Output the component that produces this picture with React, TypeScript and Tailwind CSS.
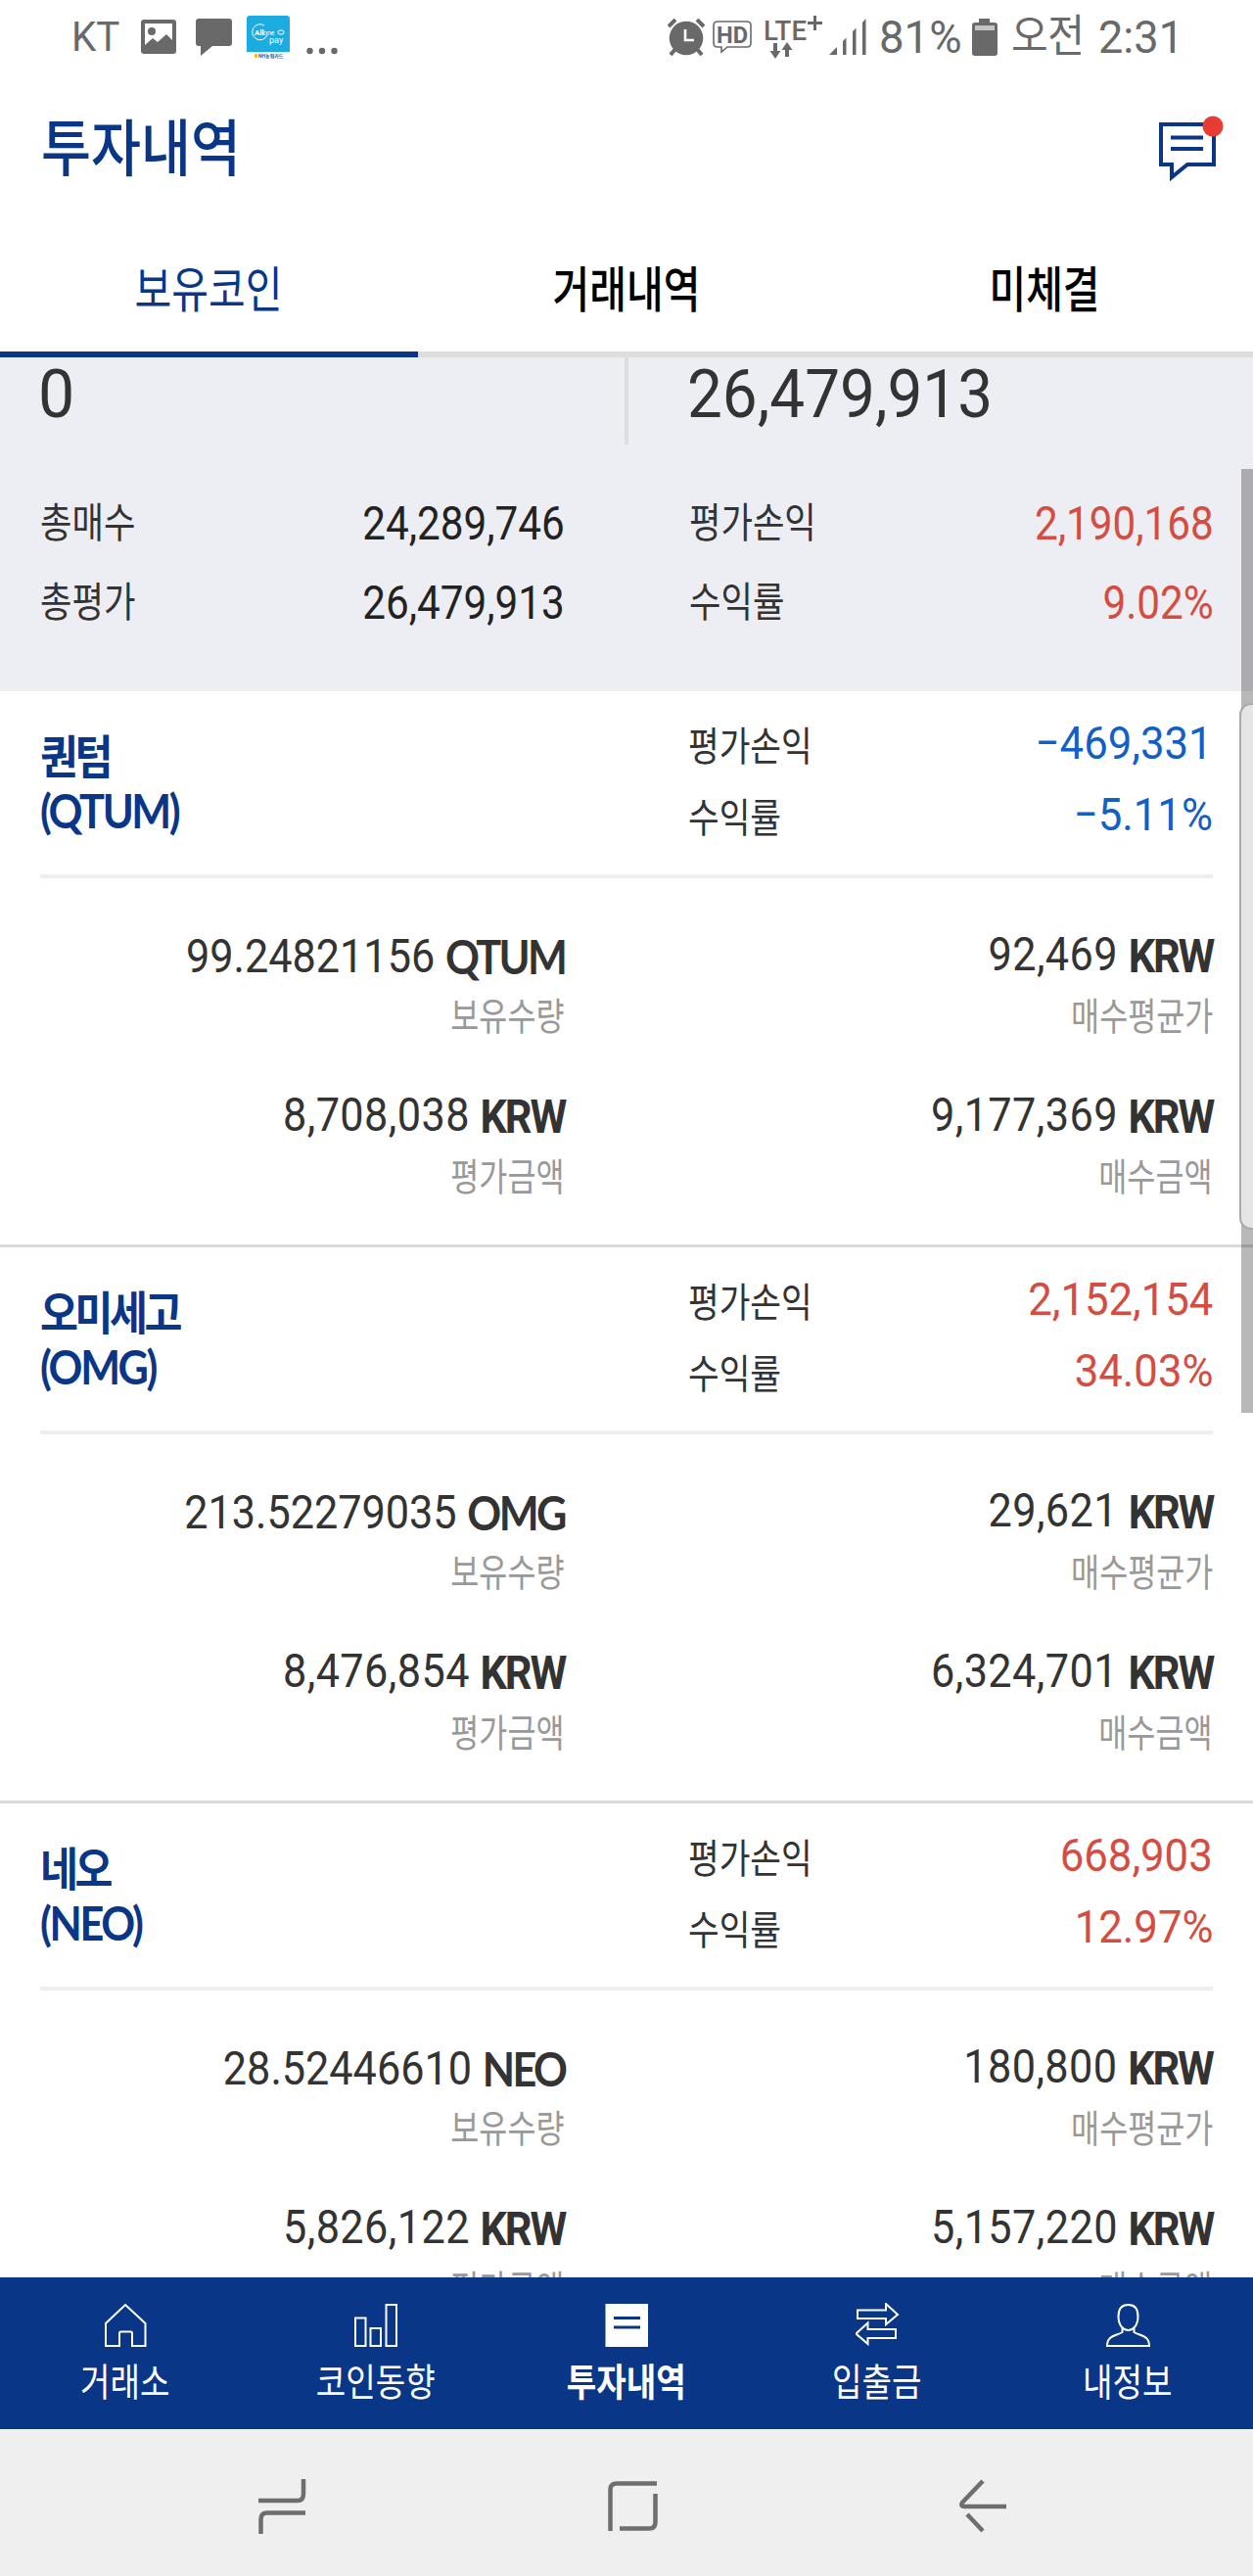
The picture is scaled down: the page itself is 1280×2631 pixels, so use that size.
import React from 'react';

interface Coin {
  name: string;
  symbol: string;
  profit: string;
  rate: string;
  down?: boolean;
  amount: string;
  average: string;
  valuation: string;
  cost: string;
}

const coins: Coin[] = [
  {
    name: '퀀텀',
    symbol: 'QTUM',
    profit: '−469,331',
    rate: '−5.11%',
    down: true,
    amount: '99.24821156',
    average: '92,469',
    valuation: '8,708,038',
    cost: '9,177,369',
  },
  {
    name: '오미세고',
    symbol: 'OMG',
    profit: '2,152,154',
    rate: '34.03%',
    amount: '213.52279035',
    average: '29,621',
    valuation: '8,476,854',
    cost: '6,324,701',
  },
  {
    name: '네오',
    symbol: 'NEO',
    profit: '668,903',
    rate: '12.97%',
    amount: '28.52446610',
    average: '180,800',
    valuation: '5,826,122',
    cost: '5,157,220',
  },
];

function StatusBar() {
  return (
    <div className="flex h-[76px] shrink-0 items-center pl-[73px] pr-[76px] text-[42px] leading-[76px] text-[#696969]">
      <span className="w-[71px] origin-left scale-x-[0.96]">KT</span>
      <svg width="36" height="36" viewBox="0 0 36 36" fill="#696969">
        <path fillRule="evenodd" d="M3 0H33Q36 0 36 3V32Q36 35 33 35H3Q0 35 0 32V3Q0 0 3 0ZM4 4V26L12 19L17 23L26 15L32 21V4Z" />
        <circle cx="11" cy="12" r="4" />
      </svg>
      <svg className="ml-5" width="37" height="38" viewBox="0 0 37 38" fill="#696969">
        <path d="M3 0H34Q37 0 37 3V25Q37 28 34 28H17L5 38V28H3Q0 28 0 25V3Q0 0 3 0Z" />
      </svg>
      <svg className="ml-[15px]" width="44" height="44" viewBox="0 0 44 44">
        <path d="M3 0H41Q44 0 44 3V37H0V3Q0 0 3 0Z" fill="#1dace2" />
        <path d="M18 10A8 8 0 1 0 21 20" fill="none" stroke="#fff" strokeWidth="1" />
        <text x="8" y="20" fontSize="8" fontWeight="700" fill="#fff">All</text>
        <text x="17" y="20" fontSize="7" fill="#fff">one</text>
        <rect x="32" y="15" width="6" height="4" rx="2" fill="none" stroke="#fff" />
        <text x="23" y="28" fontSize="9" fill="#fff">pay</text>
        <rect x="8" y="39" width="3" height="4" rx="1" fill="#f7b32b" />
        <text x="12" y="43" fontSize="5" fontWeight="700" fill="#1d5ea8">NH농협카드</text>
      </svg>
      <svg className="ml-[17px] mt-7" width="32" height="8" viewBox="0 0 32 8" fill="#696969">
        <circle cx="3.5" cy="4" r="3.2" />
        <circle cx="16" cy="4" r="3.2" />
        <circle cx="28.5" cy="4" r="3.2" />
      </svg>

      <svg className="ml-auto" width="38" height="38" viewBox="0 0 38 38" fill="#696969">
        <path d="M1 8L8 1M30 1L37 8M8 31L3 37M30 31L35 37" stroke="#696969" strokeWidth="4" />
        <circle cx="19" cy="20" r="17.3" />
        <path d="M18 11V22H27" fill="none" stroke="#fff" strokeWidth="2.6" />
      </svg>
      <svg className="ml-2" width="40" height="34" viewBox="0 0 40 34">
        <path d="M5 1H35Q39 1 39 5V23Q39 27 35 27H15L9 32V27H5Q1 27 1 23V5Q1 1 5 1Z" fill="none" stroke="#696969" strokeWidth="1.6" />
        <text x="4" y="22.5" fontSize="23" fontWeight="700" fill="#696969" textLength="32" lengthAdjust="spacingAndGlyphs">HD</text>
      </svg>
      <svg className="ml-3" width="60" height="44" viewBox="0 0 60 44" fill="#696969">
        <text x="0" y="25" fontSize="28" fontWeight="500" textLength="44" lengthAdjust="spacingAndGlyphs">LTE</text>
        <path d="M45 6H60V9H45ZM51 0H54V15H51Z" />
        <path d="M10 28H14V36H17.500L12 44L6.500 36H10ZM22 42H26V35H29.500L24 27L18.500 35H22Z" />
      </svg>
      <svg className="ml-[7px]" width="38" height="38" viewBox="0 0 38 38" fill="#696969">
        <path d="M0 37L8 29V37ZM14 23L17.500 19.500V37H14ZM24 13L27.500 9.500V37H24ZM34 4L37.500 0V37H34Z" />
      </svg>
      <span className="ml-[13px] w-[95px] origin-left scale-x-[0.97] text-[47px]">81%</span>
      <svg width="26" height="38" viewBox="0 0 26 38">
        <path d="M7 0H18V4H23Q26 4 26 7V35Q26 38 23 38H3Q0 38 0 35V7Q0 4 3 4H7Z" fill="#696969" />
        <path d="M3 7H23V12H3Z" fill="#c4c4c4" />
      </svg>
      <span className="ml-[14px] w-[89px] origin-left scale-x-[0.91] text-[45px] tracking-[-0.01em]">오전</span>
      <span className="w-[82px] origin-left scale-x-[0.96] text-[47px]">2:31</span>
    </div>
  );
}

function Header() {
  return (
    <header className="flex h-[156px] shrink-0 items-center justify-between pb-1 pl-[42px] pr-[30px]">
      <h1 className="origin-left scale-x-[0.88] text-[63px] font-medium leading-none text-[#093687]">투자내역</h1>
      <svg width="67" height="68" viewBox="0 0 67 68">
        <path d="M3 9H57V50H30L14 63V50H3Z" fill="none" stroke="#093687" strokeWidth="4" />
        <path d="M13 22.500H46M13 34H46" stroke="#093687" strokeWidth="4" />
        <circle cx="56" cy="11" r="10.500" fill="#e83c32" />
      </svg>
    </header>
  );
}

function Tabs() {
  return (
    <nav className="grid h-[133px] shrink-0 grid-cols-3 text-center text-[50px] leading-[124px]">
      <div className="border-b-[6px] border-[#093687] pt-[3px] text-[#093687]">
        <span className="inline-block scale-x-[0.82]">보유코인</span>
      </div>
      <div className="border-b-[6px] border-[#dcdddd] pt-[3px] font-medium text-black">
        <span className="inline-block scale-x-[0.82]">거래내역</span>
      </div>
      <div className="border-b-[6px] border-[#dcdddd] pt-[3px] font-medium text-black">
        <span className="inline-block scale-x-[0.82]">미체결</span>
      </div>
    </nav>
  );
}

function SummaryRow({ label, value, valueClass }: { label: string; value: string; valueClass: string }) {
  return (
    <div className="flex h-[81px] items-center justify-between leading-[81px]">
      <span className="origin-left scale-x-[0.84] text-[42px] text-[#333]">{label}</span>
      <span className={`origin-right scale-x-[0.88] text-[48px] ${valueClass}`}>{value}</span>
    </div>
  );
}

function Summary() {
  return (
    <section className="h-[341px] bg-[#edeef4]">
      <div className="flex h-[89px] text-[69px] leading-[76px] text-[#333]">
        <div className="w-[642px] border-r-4 border-[#dcdddd] pl-[39px]">
          <span className="inline-block origin-left scale-x-[0.96]">0</span>
        </div>
        <div className="pl-[60px]">
          <span className="inline-block origin-left scale-x-[0.925]">26,479,913</span>
        </div>
      </div>
      <div className="mt-10 grid grid-cols-[536px_536px] gap-x-[127px] px-[41px]">
        <SummaryRow label="총매수" value="24,289,746" valueClass="text-[#222]" />
        <SummaryRow label="평가손익" value="2,190,168" valueClass="text-[#d54c41]" />
        <SummaryRow label="총평가" value="26,479,913" valueClass="text-[#222]" />
        <SummaryRow label="수익률" value="9.02%" valueClass="text-[#d54c41]" />
      </div>
    </section>
  );
}

function ProfitRow({ label, value, down }: { label: string; value: string; down?: boolean }) {
  return (
    <div className="flex h-[73px] items-center justify-between leading-[73px]">
      <span className="mt-1 origin-left scale-x-[0.84] text-[41px] text-[#333]">{label}</span>
      <span className={`-mt-1.5 origin-right scale-x-[0.93] text-[47px] ${down ? 'text-[#1160c8]' : 'text-[#d54c41]'}`}>
        {value}
      </span>
    </div>
  );
}

function Amount({ value, unit, label }: { value: string; unit: string; label: string }) {
  const isKrw = unit === 'KRW';
  return (
    <div className="flex h-[164px] flex-col items-end whitespace-nowrap">
      <div className="h-16 origin-right scale-x-[0.9] text-[48px] leading-[65px] text-[#333]">
        <span className={isKrw ? 'tracking-[0.01em]' : ''}>{value}</span>{' '}
        <span
          className={`relative top-0.5 font-bold ${isKrw ? 'tracking-[-0.05em]' : 'font-[Lato] tracking-[-0.06em]'}`}
        >
          {unit}
        </span>
      </div>
      <div className="h-[66px] origin-right scale-x-[0.81] text-[39px] leading-[66px] text-[#999]">{label}</div>
    </div>
  );
}

function CoinCard({ coin }: { coin: Coin }) {
  return (
    <article className="h-[568px] border-b-[3px] border-[#dadada]">
      <div className="mx-[41px] flex h-[191px] justify-between border-b-4 border-[#eeeeee]">
        <div className="origin-left scale-x-[0.9] pt-[41px] font-bold leading-[54px] text-[#093687]">
          <div className="text-[47px] tracking-[-0.08em]">{coin.name}</div>
          <div className="font-[Lato] text-[48px] tracking-[-0.055em]">({coin.symbol})</div>
        </div>
        <div className="w-[536px] pt-[19px]">
          <ProfitRow label="평가손익" value={coin.profit} down={coin.down} />
          <ProfitRow label="수익률" value={coin.rate} down={coin.down} />
        </div>
      </div>
      <div className="mx-[41px] grid grid-cols-[536px_536px] gap-x-[126px] pt-[45px]">
        <Amount value={coin.amount} unit={coin.symbol} label="보유수량" />
        <Amount value={coin.average} unit="KRW" label="매수평균가" />
        <Amount value={coin.valuation} unit="KRW" label="평가금액" />
        <Amount value={coin.cost} unit="KRW" label="매수금액" />
      </div>
    </article>
  );
}

const navItems = [
  {
    label: '거래소',
    icon: <path d="M22 2L42.500 21V44H29V31Q29 29.500 27.500 29.500H17.500Q16 29.500 16 31V44H2V21Z" />,
  },
  {
    label: '코인동향',
    icon: <path d="M1 15.500H11.500V44H1ZM16.500 26H27V44H16.500ZM32.500 2H43V44H32.500Z" />,
  },
  {
    label: '투자내역',
    active: true,
    icon: (
      <>
        <path d="M1.500 2H43V44H1.500Z" fill="#fff" />
        <path d="M9 15.500H36M9 25H36" stroke="#093687" strokeWidth="3" />
      </>
    ),
  },
  {
    label: '입출금',
    icon: <path d="M2 7.500H31V1L43 12L31 22V16H2ZM41 27H12.500V20.500L0.500 31.500L12.500 42V36H41Z" />,
  },
  {
    label: '내정보',
    icon: (
      <path d="M22.500 2C16 2 12.500 6 12.500 14C12.500 23 17.500 28 22.500 28C27.500 28 32.500 23 32.500 14C32.500 6 29 2 22.500 2ZM16.500 25V30C10 34 1 33 1 44H44C44 33 35 34 28.500 30V25" />
    ),
  },
];

function BottomNav() {
  return (
    <nav className="grid h-[155px] shrink-0 grid-cols-5 bg-[#093687] text-center text-white">
      {navItems.map((item) => (
        <div key={item.label} className="flex flex-col items-center pt-[26px]">
          <svg width="45" height="46" viewBox="0 0 45 46" fill="none" stroke="#fff" strokeWidth="2">
            {item.icon}
          </svg>
          <span className={`mt-[11px] scale-x-[0.85] text-[39px] leading-[50px] ${item.active ? 'font-bold' : ''}`}>
            {item.label}
          </span>
        </div>
      ))}
    </nav>
  );
}

function SystemBar() {
  return (
    <div className="flex h-[150px] shrink-0 items-center border-t border-white bg-[#efefef] pl-[264px] pt-1.5">
      <svg width="49" height="56" viewBox="0 0 49 56" fill="none" stroke="#6e6e6e" strokeWidth="4.500">
        <path d="M46 0V15Q46 22 40 22H0M2.500 56V41Q2.500 34.500 9 34.500H48" />
      </svg>
      <svg className="ml-[308px]" width="51" height="52" viewBox="0 0 51 52" fill="none" stroke="#6e6e6e" strokeWidth="4.500">
        <path d="M2.500 51V9Q2.500 2.500 9 2.500H50M48.500 13V42Q48.500 48.500 42 48.500H12" />
      </svg>
      <svg className="ml-[308px]" width="49" height="56" viewBox="0 0 49 56" fill="none" stroke="#6e6e6e" strokeWidth="4.500">
        <path d="M24 2L3 24Q1 28 5 28H48M8 36L24 53" />
      </svg>
    </div>
  );
}

export default function App() {
  return (
    <div className="flex h-[2631px] w-[1280px] flex-col overflow-hidden bg-white font-[Roboto,'Noto_Sans_CJK_KR',sans-serif]">
      <StatusBar />
      <Header />
      <Tabs />
      <main className="relative min-h-0 flex-1 overflow-hidden">
        <Summary />
        {coins.map((coin) => (
          <CoinCard key={coin.symbol} coin={coin} />
        ))}
        {/* Scrollbar */}
        <div className="absolute right-0 top-[114px] h-[964px] w-[12px] bg-black/28" />
        {/* Edge panel handle */}
        <div className="absolute -right-3 top-[353px] h-[538px] w-[26px] rounded-[12px] border-2 border-[#aaa] bg-[#e5e5e5]" />
      </main>
      <BottomNav />
      <SystemBar />
    </div>
  );
}
